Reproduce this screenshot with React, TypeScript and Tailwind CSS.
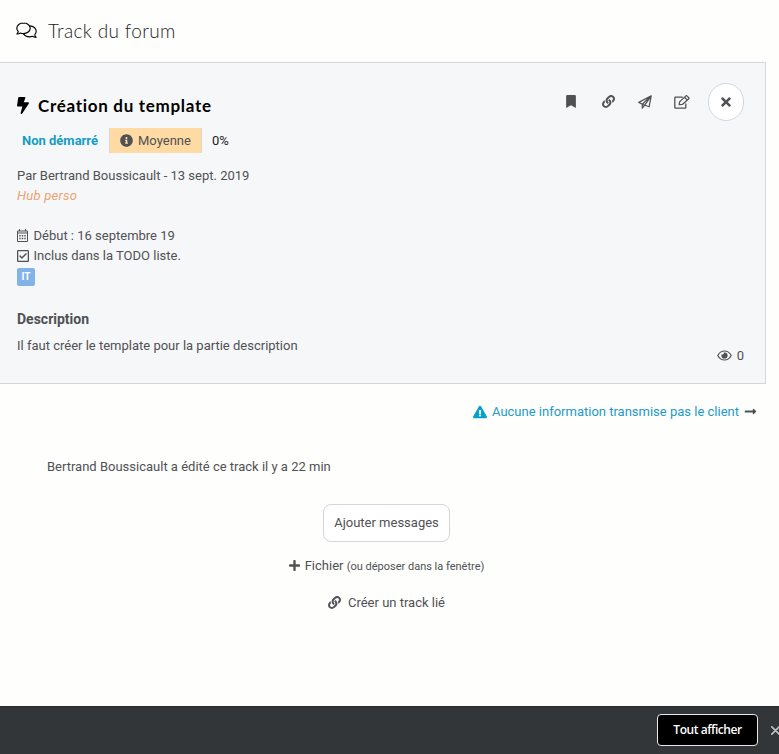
import type { ReactNode } from 'react';
import {
  FaBolt,
  FaBookmark,
  FaExclamationTriangle,
  FaInfoCircle,
  FaLink,
  FaLongArrowAltRight,
  FaPlus,
  FaRegCheckSquare,
  FaTimes,
} from 'react-icons/fa';

function Line({ className, box, children, weight }: { className: string; box: string; children: ReactNode; weight: number }) {
  return (
    <svg
      className={className}
      viewBox={box}
      fill="none"
      stroke="currentColor"
      strokeWidth={weight}
      strokeLinejoin="round"
      strokeLinecap="round"
      aria-hidden="true"
    >
      {children}
    </svg>
  );
}

function CommentsIcon() {
  return (
    <Line className="h-[17px] w-[21px] shrink-0 text-black" box="0 0 21 17" weight={1.15}>
      <path d="M7.500.9C3.700.9.8 3.200.8 6.200c0 1.300.6 2.500 1.500 3.400-.3.900-.8 1.700-1.400 2.400 1.200.1 2.500-.3 3.500-1 1 .4 2 .6 3.100.6 3.700 0 6.700-2.400 6.700-5.400S11.200.9 7.500.9Z" />
      <path d="M13.800 3.900c3.600.1 6.400 2.500 6.400 5.400 0 1.400-.6 2.600-1.500 3.500.3 1 .8 1.800 1.500 2.500-1.300.1-2.600-.3-3.600-1-.9.300-2 .5-3.100.5-2.700 0-5-1.300-6.100-3.200" />
    </Line>
  );
}

function PlaneIcon() {
  return (
    <Line className="h-[14px] w-[14px]" box="0 0 14 14" weight={1.2}>
      <path d="M13.200.8.8 7.400l3.500 1.900 6.800 2.500L13.200.8ZM4.300 9.300v3.900l2.400-3M4.300 9.300l8.900-8.500-6.500 9.400" />
    </Line>
  );
}

function EditIcon() {
  return (
    <Line className="h-[14px] w-[16px]" box="0 0 16 14" weight={1.3}>
      <path d="M8.300 2.200H1.500a.7.700 0 0 0-.7.700v9.600c0 .4.300.7.700.7h9.600c.4 0 .7-.3.700-.7V9" />
      <path d="m5.200 9.700.4-2.800L11.900.9c.3-.3.700-.3 1 0l1.900 1.800c.3.300.3.700 0 1L8.300 9.400l-3.100.3ZM10.600 2.300l2.800 2.800" />
    </Line>
  );
}

function EyeIcon() {
  return (
    <svg className="mb-px h-[11px] w-[15px]" viewBox="0 0 15 11" fill="none" aria-hidden="true">
      <path d="M.8 5.500C2.200 2.700 4.600 1 7.500 1s5.300 1.700 6.700 4.500C12.800 8.300 10.400 10 7.500 10S2.200 8.300.8 5.500Z" stroke="currentColor" strokeWidth="1.200" />
      <path d="M7.500 2.400a3.100 3.100 0 1 1-3.100 3.100c0-.4.100-.8.300-1.200.8.500 2.100.200 2.100-.800 0-.4-.100-.700-.3-.9.300-.1.600-.2 1-.2Z" fill="currentColor" />
    </svg>
  );
}

function CalendarIcon() {
  return (
    <svg className="mb-px h-[13px] w-[11px] shrink-0" viewBox="0 0 11 13" fill="currentColor" aria-hidden="true">
      <path fillRule="evenodd" d="M2 0h1v1.500h5V0h1v1.500h1a1 1 0 0 1 1 1V12a1 1 0 0 1-1 1H1a1 1 0 0 1-1-1V2.500a1 1 0 0 1 1-1h1V0ZM1 4.500V12h9V4.500H1Zm0-1h9v-1H1v1Z" />
      <path d="M2.300 6h1.400v1.400H2.300zM4.800 6h1.400v1.400H4.800zM7.300 6h1.400v1.400H7.300zM2.300 8.800h1.400v1.400H2.300zM4.800 8.800h1.400v1.400H4.800zM7.300 8.800h1.400v1.400H7.300z" />
    </svg>
  );
}

export default function App() {
  return (
    <div className="flex h-[754px] w-[779px] flex-col overflow-hidden bg-[#fefefd] font-['Roboto',sans-serif] text-[13px] leading-5 text-[#4f5154]">
      <header className="flex h-[61px] shrink-0 items-center gap-[11px] pl-4">
        <CommentsIcon />
        <h1 className="font-['Lato',sans-serif] text-[19px] font-light tracking-[0.35px] text-[#222]">Track du forum</h1>
      </header>

      <section className="mt-px flex h-[322px] w-[766px] shrink-0 flex-col border-y border-r border-[#d4d6da] bg-[#f6f7f9] pl-[17px]">
        <div className="flex h-[65px] items-start justify-between pr-[21px]">
          <div className="flex items-center gap-[9px] pt-[31px]">
            <FaBolt className="mb-[2px] h-[17px] w-[12px] text-black" preserveAspectRatio="none" />
            <h2 className="font-['Lato',sans-serif] text-[17px] leading-6 font-bold tracking-[0.7px] text-black">Création du template</h2>
          </div>
          <div className="flex items-center pt-5">
            <FaBookmark className="mr-[26px] mb-[2px] h-[13px] w-[10px]" />
            <FaLink className="mr-[23px] mb-px h-[13px] w-[13px]" />
            <span className="mr-[22px] mb-px"><PlaneIcon /></span>
            <span className="mr-[18px] mb-px"><EditIcon /></span>
            <button className="flex h-[38px] w-9 items-center justify-center rounded-full border border-[#d4d6da] bg-white pb-px">
              <FaTimes className="h-[14px] w-[14px]" />
            </button>
          </div>
        </div>

        <div className="flex h-[25px] items-center">
          <strong className="ml-[5px] w-[87px] font-bold text-[#159dc4]">Non démarré</strong>
          <span className="flex h-[25px] w-[93px] items-center gap-[5px] border-x border-[#ded7cf] bg-[#ffdaa2] pl-[10px]">
            <FaInfoCircle className="h-[13px] w-[13px]" />
            Moyenne
          </span>
          <span className="ml-[10px] text-[#222]">0%</span>
        </div>

        <div className="mt-[13px]">
          <p>Par Bertrand Boussicault - 13 sept. 2019</p>
          <p className="tracking-[0.25px] text-[#e9a372] italic">Hub perso</p>
        </div>

        <div className="mt-5">
          <p className="flex h-5 items-center gap-[5.500px]"><CalendarIcon />Début : 16 septembre 19</p>
          <p className="flex h-5 items-center gap-[4.500px]"><FaRegCheckSquare className="mb-px h-[14px] w-[12px]" />Inclus dans la TODO liste.</p>
          <span className="mt-[2px] flex h-[18px] w-[18px] items-center justify-center rounded-[2px] bg-[#81b3e9] text-[10px] font-bold text-white">IT</span>
        </div>

        <h3 className="mt-[23px] text-[14px] font-bold">Description</h3>
        <p className="mt-[7px]">Il faut créer le template pour la partie description</p>
        <div className="-mt-[10px] flex items-center justify-end gap-[5px] pr-[21px]">
          <EyeIcon />0
        </div>
      </section>

      <main className="flex flex-1 flex-col">
        <div className="mt-[18px] flex items-center justify-end pr-[22px]">
          <FaExclamationTriangle className="mr-[5px] mb-px h-[14px] w-[14px] text-[#05a0cc]" />
          <a className="mr-[5px] text-[#249bc4]">Aucune information transmise pas le client</a>
          <FaLongArrowAltRight className="mb-px h-[13px] w-[13px]" />
        </div>
        <p className="mt-[35px] ml-[47px]">Bertrand Boussicault a édité ce track il y a 22 min</p>
        <div className="mt-[27px] flex w-[773px] flex-col items-center">
          <button className="h-[38px] w-[127px] rounded-[8px] border border-[#d4d6da] bg-white">Ajouter messages</button>
          <div className="mt-[14px] flex items-center gap-[5px]">
            <FaPlus className="mb-[2px] h-[13px] w-[11px]" />
            <span>Fichier <span className="text-[11px]">(ou déposer dans la fenêtre)</span></span>
          </div>
          <div className="mt-4 flex items-center gap-[7px]">
            <FaLink className="mb-px h-[13px] w-[13px]" />
            <span>Créer un track lié</span>
          </div>
        </div>
      </main>

      <footer className="flex h-12 shrink-0 items-center border-t border-[#292b2f] bg-[#323639] pb-px pl-[657px]">
        <button className="h-8 w-[101px] shrink-0 rounded-[4px] border border-[#e8e8e8] bg-black font-['Open_Sans',sans-serif] text-[12px] font-semibold tracking-[-0.45px] text-white">Tout afficher</button>
        <Line className="ml-[13px] h-[9px] w-[9px] shrink-0 text-[#bfc0c1]" box="0 0 9 9" weight={1.7}>
          <path d="m.8.8 7.400 7.400M8.200.8.8 8.200" />
        </Line>
      </footer>
    </div>
  );
}
